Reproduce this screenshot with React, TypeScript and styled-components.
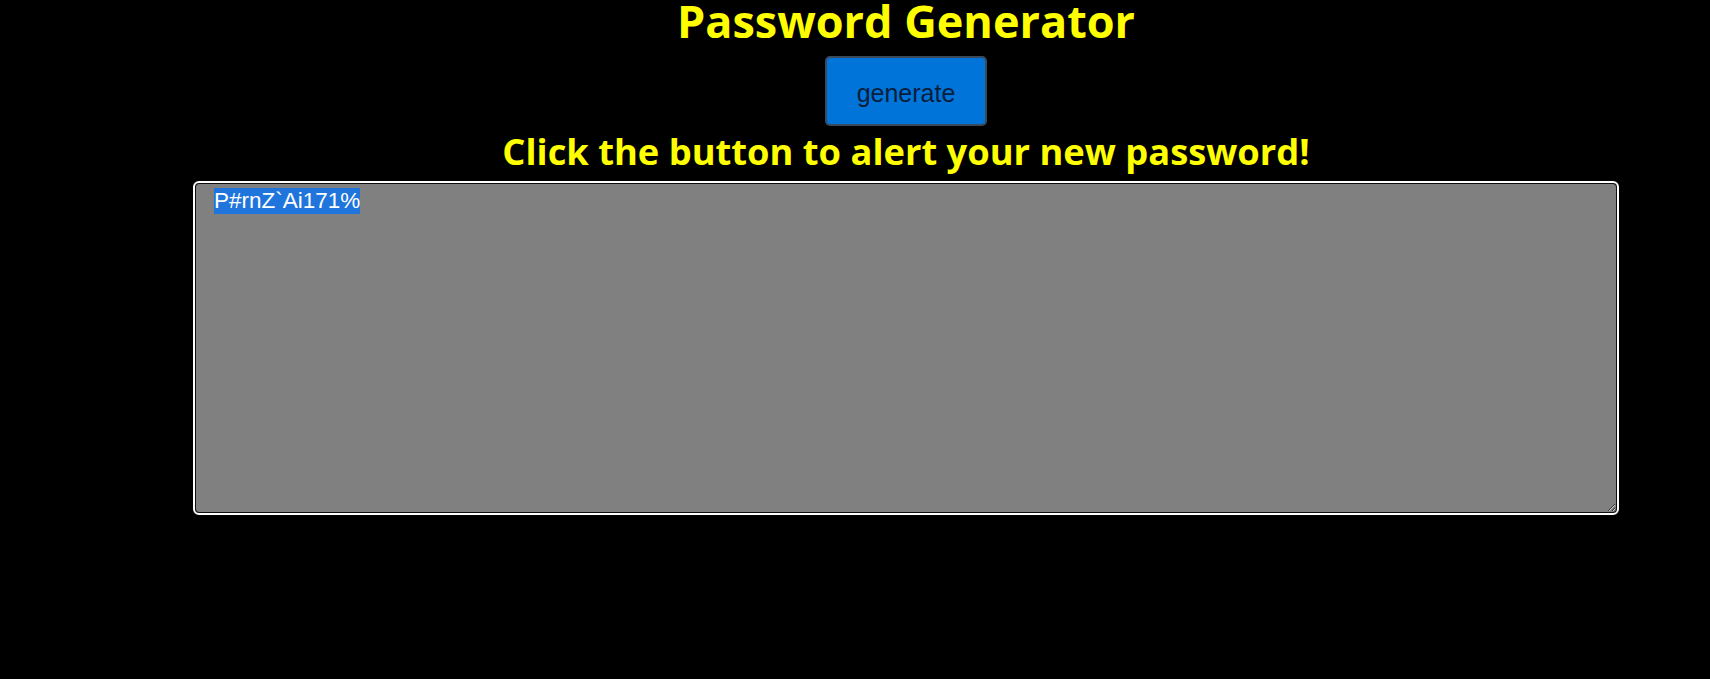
import React, { useEffect, useRef } from "react";
import styled, { createGlobalStyle } from "styled-components";

const GlobalStyle = createGlobalStyle`
  html, body {
    margin: 0;
    padding: 0;
    background: #000;
  }
  body {
    font-family: "Open Sans", "Liberation Sans", sans-serif;
    min-height: 679px;
  }
`;

const Page = styled.main`
  display: flex;
  flex-direction: column;
  align-items: center;
  padding-left: 102px;
  min-height: 679px;
  box-sizing: border-box;
`;

const Title = styled.h1`
  margin: 0;
  font-family: "Open Sans", "Liberation Sans", sans-serif;
  font-weight: 700;
  font-size: 45px;
  line-height: 42px;
  color: #ffff00;
  white-space: nowrap;
`;

const GenerateButton = styled.button`
  margin-top: 14px;
  width: 162px;
  height: 70px;
  box-sizing: border-box;
  padding: 4px 0 0;
  background: #0074d9;
  border: 2px solid #3a4a5a;
  border-radius: 5px;
  color: #0a1e3c;
  font-family: "Liberation Sans", Arial, sans-serif;
  font-size: 25px;
  cursor: pointer;
`;

const Subtitle = styled.h2`
  margin: 3px 0 0;
  font-family: "Open Sans", "Liberation Sans", sans-serif;
  font-weight: 700;
  font-size: 36.3px;
  line-height: 44px;
  color: #ffff00;
  white-space: nowrap;
`;

const PasswordBox = styled.textarea`
  margin-top: 10px;
  width: 1422px;
  height: 330px;
  box-sizing: border-box;
  padding: 4px 18px;
  background: #808080;
  color: #fff;
  border: 1px solid #101010;
  border-radius: 4px;
  outline: 2px solid #fff;
  outline-offset: 0;
  font-family: "Liberation Sans", Arial, sans-serif;
  font-size: 22.5px;
  line-height: 26px;
  resize: both;

  &::selection {
    background: #2075dc;
    color: #fff;
  }
  &:focus {
    outline: 2px solid #fff;
  }
`;

export default function App() {
  const ref = useRef<HTMLTextAreaElement>(null);
  const password = "P#rnZ`Ai171%";

  useEffect(() => {
    const el = ref.current;
    if (el) {
      el.focus();
      el.setSelectionRange(0, el.value.length);
    }
  }, []);

  return (
    <>
      <GlobalStyle />
      <Page>
        <Title>Password Generator</Title>
        <GenerateButton type="button">generate</GenerateButton>
        <Subtitle>Click the button to alert your new password!</Subtitle>
        <PasswordBox ref={ref} defaultValue={password} spellCheck={false} />
      </Page>
    </>
  );
}
